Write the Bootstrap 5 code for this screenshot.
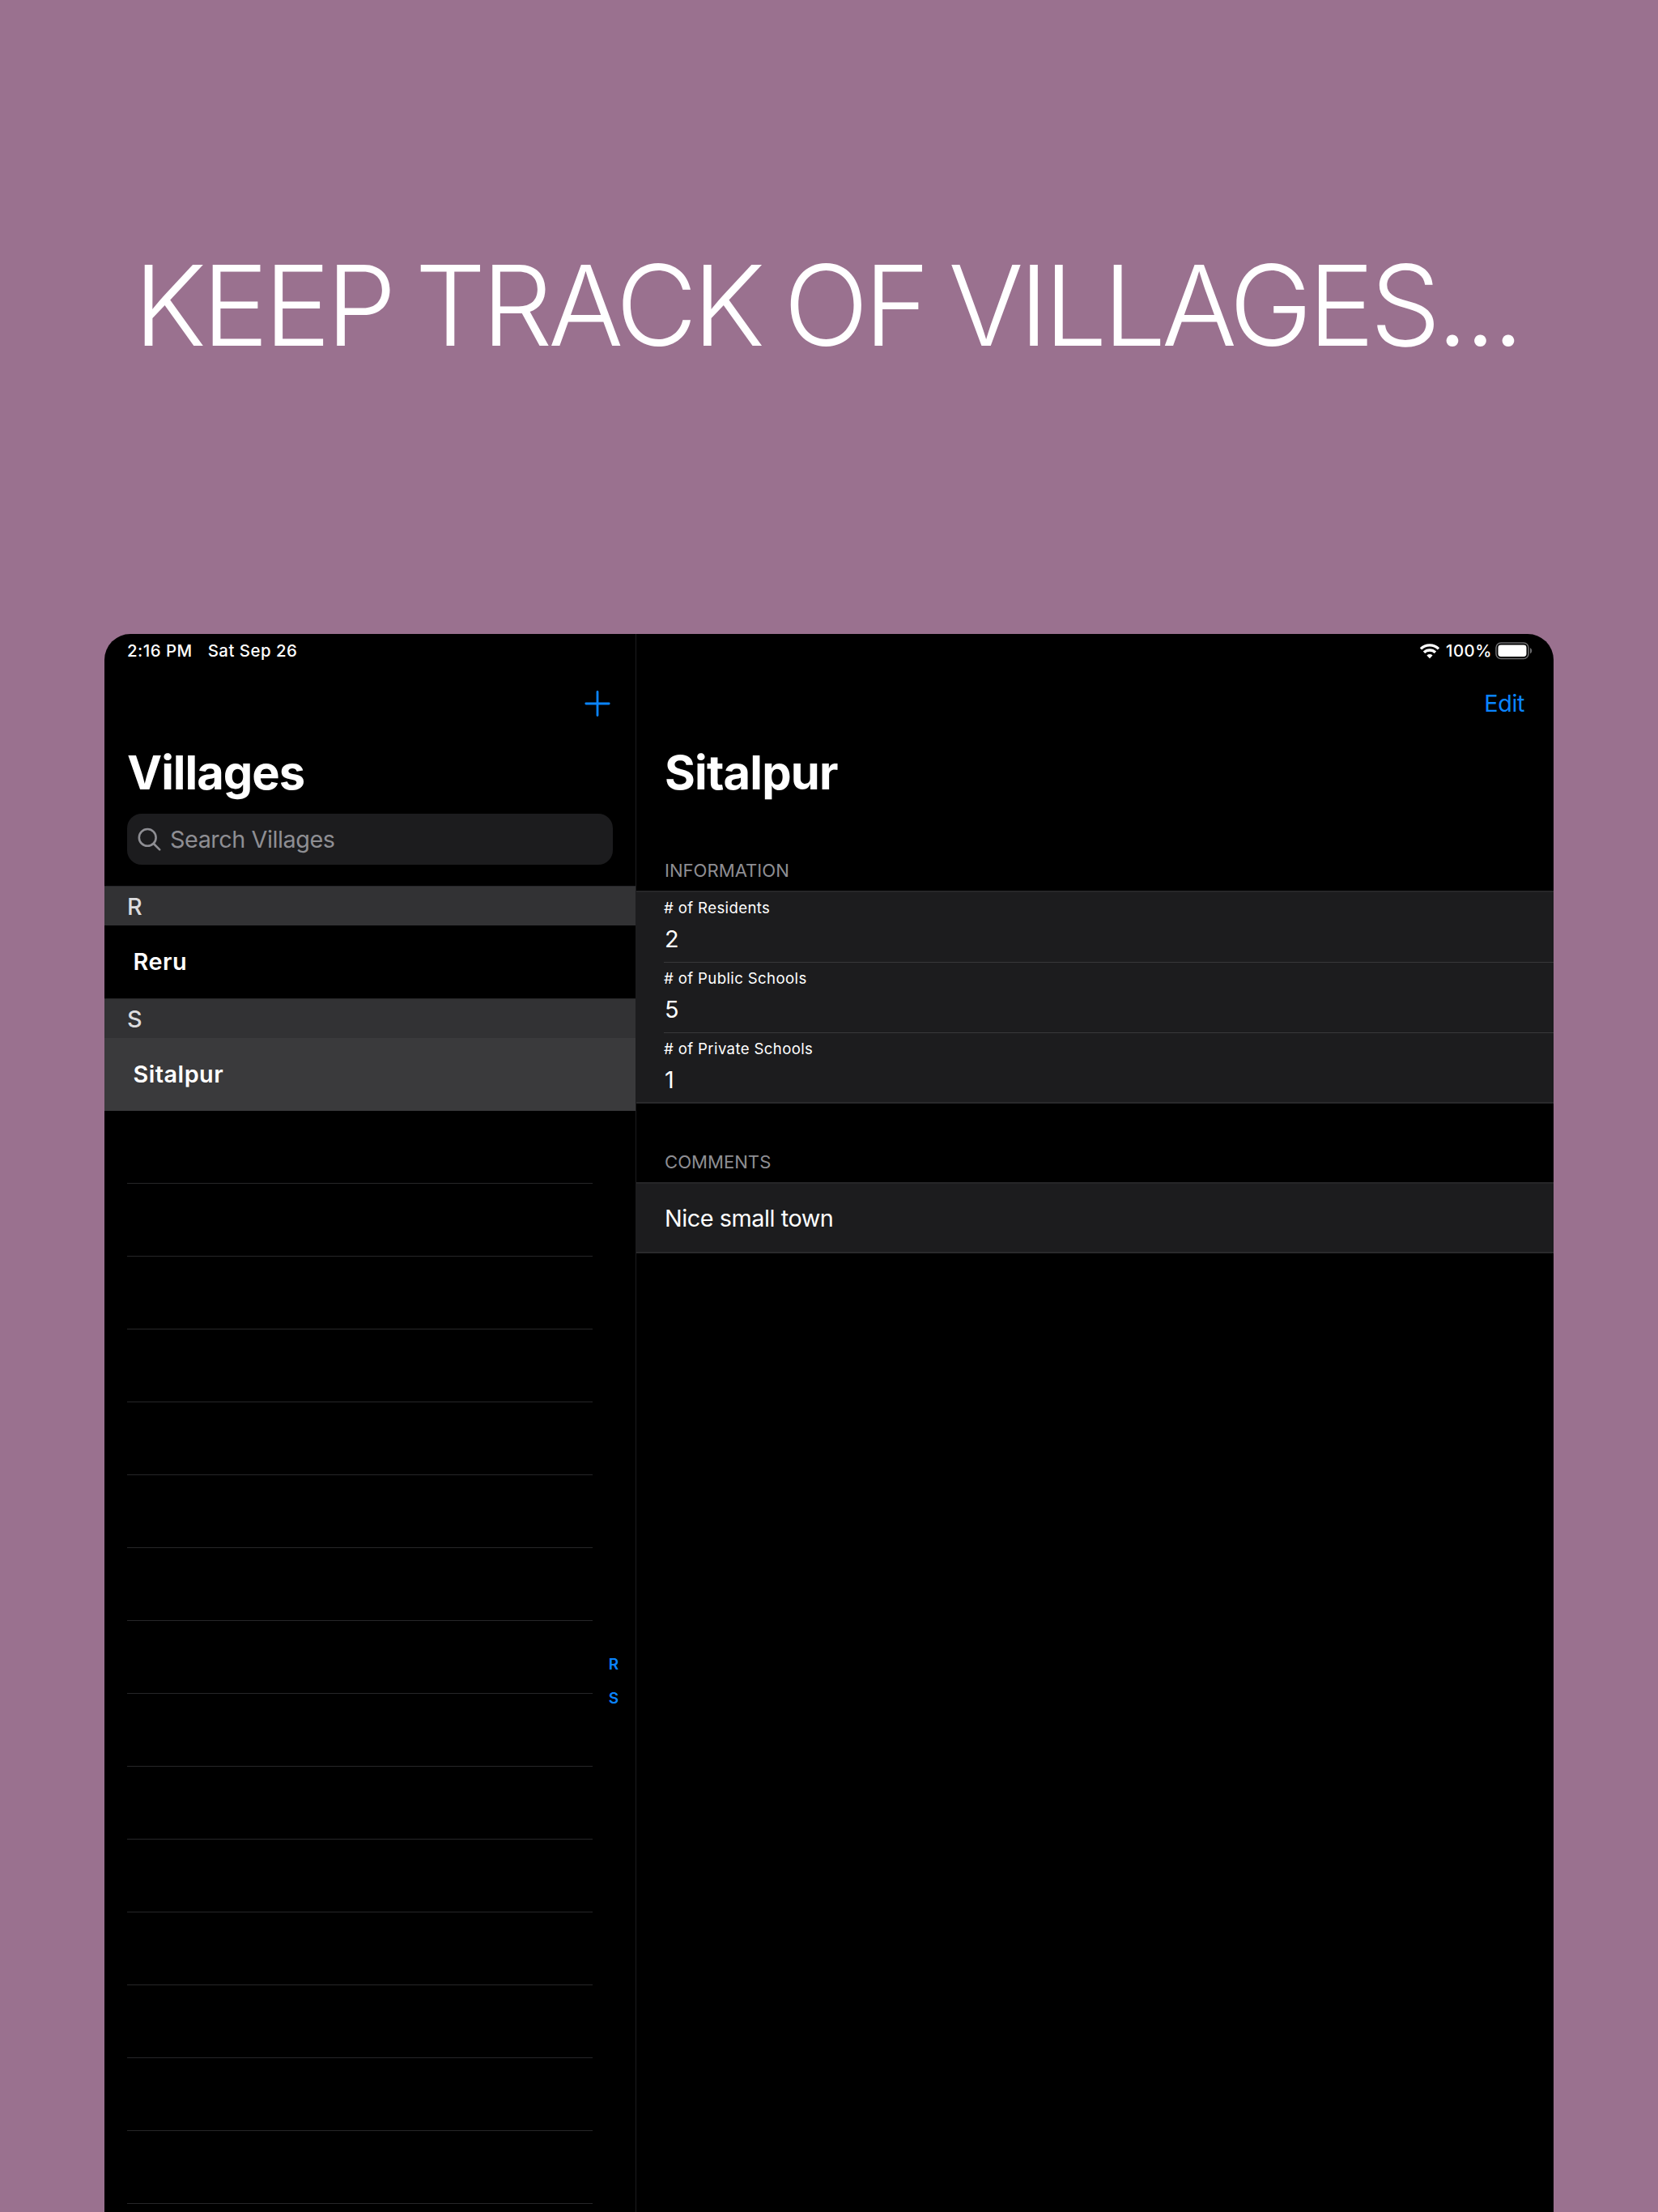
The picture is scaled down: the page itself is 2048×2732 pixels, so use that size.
<!DOCTYPE html>
<html lang="en" data-bs-theme="dark">
<head>
<meta charset="utf-8">
<title>Villages</title>
<link href="https://cdn.jsdelivr.net/npm/bootstrap@5.3.0/dist/css/bootstrap.min.css" rel="stylesheet">
<style>
  body { background: #9a718f; font-family: Inter, "Liberation Sans", sans-serif; color: #fff; font-size: 28.8px; }
  .poster { width: 2048px; height: 2732px; }
  .headline { height: 783px; padding: 302px 0 0 165.5px; font-size: 138px; line-height: 150px; font-weight: 300; letter-spacing: -5.35px; word-spacing: -5.2px; }
  .dots { letter-spacing: -4.4px; }
  .tablet { width: 1790px; height: 1949px; margin-left: 129px; background: #000; border-radius: 32px 32px 0 0; }
  .side-pane { width: 657px; border-right: 1.5px solid #1c1c1e; }
  .status-row { height: 42px; font-size: 20.4px; font-weight: 500; letter-spacing: .5px; }
  .status-right { padding-right: 26px; }
  .today { margin-left: 19px; }
  .charge { margin: 0 4px 0 7px; }
  .nav-row { height: 88px; color: #0a84ff; letter-spacing: -.4px; }
  .big-title { height: 83px; font-size: 57.8px; font-weight: 700; line-height: 83px; letter-spacing: -1px; }
  .side-pad { padding-left: 28px; padding-right: 28px; }
  .detail-title { letter-spacing: -.8px; }
  .search-box { height: 63px; margin: 9px 28px 26px 28px; padding-left: 13px; border-radius: 18px; background: #1c1c1e; color: #8e8e93; letter-spacing: -.45px; }
  .search-hint { margin-left: 10px; }
  .letter-head { height: 49px; padding: 2px 0 0 28px; background: #323234; border-top: 1px solid #262628; color: #dcdcde; font-weight: 500; }
  .place { height: 90px; padding-left: 35.5px; font-weight: 600; letter-spacing: .5px; }
  .place-on { background: #3a3a3c; }
  .blank { height: 90px; margin: 0 53px 0 28px; border-bottom: 1px solid #262628; }
  .jump { top: 1252px; right: 19px; width: 16px; font-size: 19px; font-weight: 600; line-height: 42px; color: #0a84ff; }
  .detail-pad { padding-left: 35px; padding-right: 36px; }
  .group-name { height: 50px; padding: 1px 0 0 35px; font-size: 22.1px; color: #8e8e93; }
  .info-name { margin-top: 54px; }
  .notes-name { margin-top: 46px; height: 51px; }
  .group-box { background: #1c1c1e; border-top: 2px solid #262628; border-bottom: 2px solid #2a2a2c; }
  .notes-box { height: 88px; letter-spacing: -.45px; }
  .field { height: 87.2px; margin-left: 34px; padding-top: 4px; border-bottom: 1px solid #38383a; }
  .field:last-child { border-bottom: 0; height: 85px; }
  .field-name { font-size: 18.6px; line-height: 30px; letter-spacing: .37px; }
  .field-value { line-height: 36px; margin-top: 6px; padding-left: 1px; }
</style>
<script src="https://cdn.jsdelivr.net/npm/bootstrap@5.3.0/dist/js/bootstrap.bundle.min.js"></script>
</head>
<body>
<main class="poster overflow-hidden">
  <h1 class="headline m-0 text-nowrap">KEEP TRACK OF VILLAGES<span class="dots">...</span></h1>

  <div class="tablet d-flex overflow-hidden">
    <aside class="side-pane position-relative flex-shrink-0">
      <div class="status-row side-pad d-flex align-items-center"><span class="clock">2:16 PM</span><span class="today">Sat Sep 26</span></div>
      <div class="nav-row side-pad d-flex align-items-center justify-content-end">
        <svg width="36" height="36" viewBox="0 0 36 36" fill="none" stroke="currentColor" stroke-width="2.8" stroke-linecap="round"><path d="M17 3.5v29M2.8 18h28.4"/></svg>
      </div>
      <h2 class="big-title side-pad m-0">Villages</h2>
      <div class="search-box d-flex align-items-center">
        <svg width="30" height="30" viewBox="0 0 30 30" fill="none" stroke="currentColor" stroke-width="2.6" stroke-linecap="round"><circle cx="12.2" cy="12.4" r="10.4"/><path d="M19.8 20l7.4 7.4"/></svg>
        <span class="search-hint">Search Villages</span>
      </div>
      <div class="letter-head d-flex align-items-center">R</div>
      <div class="place d-flex align-items-center">Reru</div>
      <div class="letter-head d-flex align-items-center">S</div>
      <div class="place place-on d-flex align-items-center">Sitalpur</div>
      <div class="blank"></div><div class="blank"></div><div class="blank"></div><div class="blank"></div><div class="blank"></div>
      <div class="blank"></div><div class="blank"></div><div class="blank"></div><div class="blank"></div><div class="blank"></div>
      <div class="blank"></div><div class="blank"></div><div class="blank"></div><div class="blank"></div><div class="blank"></div>
      <div class="jump position-absolute text-center"><div>R</div><div>S</div></div>
    </aside>

    <section class="flex-grow-1">
      <div class="status-row status-right d-flex align-items-center justify-content-end">
        <svg width="26" height="20" viewBox="0 0 26 20" fill="none" stroke="#fff" stroke-width="3.4"><path d="M2 7.4a15.6 15.6 0 0 1 22 0M6 11.8a10 10 0 0 1 14 0"/><path d="M13 19.2l-3.6-3.8a5.2 5.2 0 0 1 7.2 0z" fill="#fff" stroke="none"/></svg>
        <span class="charge">100%</span>
        <svg width="46" height="22" viewBox="0 0 46 22"><rect x="1" y="1" width="40" height="19.5" rx="6" fill="none" stroke="#6b6b6d" stroke-width="1.6"/><rect x="3.5" y="3.5" width="35" height="14.5" rx="3.4" fill="#fff"/><path d="M43 7.2c3 1.2 3 5.8 0 7z" fill="#6b6b6d"/></svg>
      </div>
      <div class="nav-row detail-pad d-flex align-items-center justify-content-end">Edit</div>
      <h2 class="big-title detail-title detail-pad m-0">Sitalpur</h2>

      <div class="group-name info-name d-flex align-items-center">INFORMATION</div>
      <div class="group-box">
        <div class="field"><div class="field-name"># of Residents</div><div class="field-value">2</div></div>
        <div class="field"><div class="field-name"># of Public Schools</div><div class="field-value">5</div></div>
        <div class="field"><div class="field-name"># of Private Schools</div><div class="field-value">1</div></div>
      </div>
      <div class="group-name notes-name d-flex align-items-center">COMMENTS</div>
      <div class="group-box notes-box detail-pad d-flex align-items-center">Nice small town</div>
    </section>
  </div>
</main>
</body>
</html>
